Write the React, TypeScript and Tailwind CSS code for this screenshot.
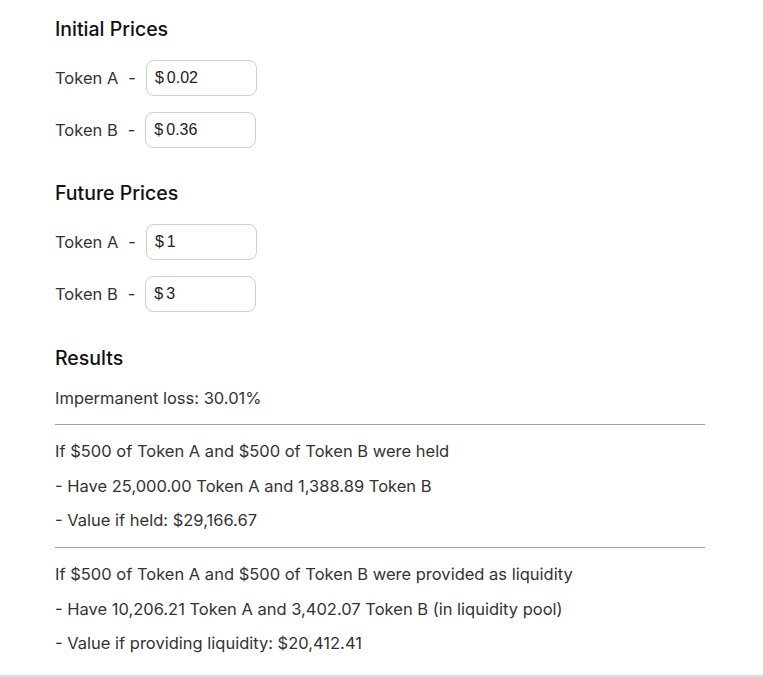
const INITIAL = [
  { label: "Token A", value: "0.02" },
  { label: "Token B", value: "0.36" },
];

const FUTURE = [
  { label: "Token A", value: "1" },
  { label: "Token B", value: "3" },
];

function PriceRow({ label, value }: { label: string; value: string }) {
  return (
    <div className="flex h-[36px] items-center text-[16.5px] text-[#333]">
      <span>{label}</span>
      <span className="ml-[10px]">-</span>
      <label className="ml-[10px] flex h-[36px] w-[111px] items-center rounded-[8px] border border-[#cfcfcf] bg-white pl-[8px] font-['Liberation_Sans',Arial,sans-serif] text-[16px] text-[#222]">
        <span>$</span>
        <input
          className="ml-[3px] w-[80px] bg-transparent outline-none"
          defaultValue={value}
        />
      </label>
    </div>
  );
}

export default function App() {
  return (
    <div className="min-h-[677px] bg-white font-['Inter',sans-serif]">
      <div className="w-[705px] pb-[21px] pl-[55px] pt-[17px]">
        <h2 className="text-[19.5px] font-medium leading-[24px] text-[#111]">
          Initial Prices
        </h2>
        <div className="mt-[19px] flex flex-col gap-[16px]">
          {INITIAL.map((r) => (
            <PriceRow key={r.label} {...r} />
          ))}
        </div>

        <h2 className="mt-[33px] text-[19.5px] font-medium leading-[24px] text-[#111]">
          Future Prices
        </h2>
        <div className="mt-[19px] flex flex-col gap-[16px]">
          {FUTURE.map((r) => (
            <PriceRow key={r.label} {...r} />
          ))}
        </div>

        <h2 className="mt-[34px] text-[19.5px] font-medium leading-[24px] text-[#111]">
          Results
        </h2>
        <div className="text-[16.5px] leading-[22px] text-[#333]">
          <p className="mt-[17px]">Impermanent loss: 30.01%</p>
          <hr className="mt-[15px] border-t border-[#a3a3a3]" />
          <div className="mt-[15px] flex flex-col gap-[12.5px]">
            <p>If $500 of Token A and $500 of Token B were held</p>
            <p>- Have 25,000.00 Token A and 1,388.89 Token B</p>
            <p>- Value if held: $29,166.67</p>
          </div>
          <hr className="mt-[16px] border-t border-[#a3a3a3]" />
          <div className="mt-[15px] flex flex-col gap-[12.5px]">
            <p>If $500 of Token A and $500 of Token B were provided as liquidity</p>
            <p>- Have 10,206.21 Token A and 3,402.07 Token B (in liquidity pool)</p>
            <p>- Value if providing liquidity: $20,412.41</p>
          </div>
        </div>
      </div>
      <div className="h-[2px] w-full bg-[#dcdcdc]" />
    </div>
  );
}
